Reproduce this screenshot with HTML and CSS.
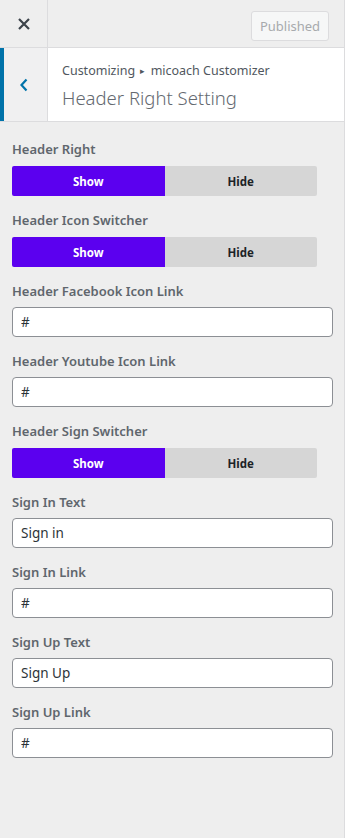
FILE: index.html
```html
<!DOCTYPE html>
<html lang="en">
<head>
    <meta charset="UTF-8">
    <meta name="viewport" content="width=device-width, initial-scale=1.0">
    <title>Customizer - Header Right Setting</title>
    <link rel="stylesheet" href="styles.css">
</head>
<body>
    <div class="customizer">
        <div class="topbar">
            <div class="close-btn">
                <svg width="12" height="12" viewBox="0 0 12 12">
                    <path d="M1 1 L11 11 M11 1 L1 11" stroke="#3c434a" stroke-width="2.2" fill="none"/>
                </svg>
            </div>
            <div class="topbar-actions">
                <button class="publish-btn">Published</button>
            </div>
        </div>

        <div class="section-head">
            <div class="back-btn">
                <svg width="10" height="14" viewBox="0 0 10 14">
                    <polyline points="7.5,1.5 2.5,7 7.5,12.5" stroke="#0073aa" stroke-width="2.2" fill="none"/>
                </svg>
            </div>
            <div class="section-title">
                <div class="crumbs">Customizing <span class="arrow">&#9656;</span> micoach Customizer</div>
                <h2>Header Right Setting</h2>
            </div>
        </div>

        <div class="controls">
            <div class="control">
                <label class="control-label">Header Right</label>
                <div class="switch">
                    <span class="switch-opt on">Show</span>
                    <span class="switch-opt">Hide</span>
                </div>
            </div>
            <div class="control">
                <label class="control-label">Header Icon Switcher</label>
                <div class="switch">
                    <span class="switch-opt on">Show</span>
                    <span class="switch-opt">Hide</span>
                </div>
            </div>
            <div class="control">
                <label class="control-label">Header Facebook Icon Link</label>
                <input class="text-input" type="text" value="#">
            </div>
            <div class="control">
                <label class="control-label">Header Youtube Icon Link</label>
                <input class="text-input" type="text" value="#">
            </div>
            <div class="control">
                <label class="control-label">Header Sign Switcher</label>
                <div class="switch">
                    <span class="switch-opt on">Show</span>
                    <span class="switch-opt">Hide</span>
                </div>
            </div>
            <div class="control">
                <label class="control-label">Sign In Text</label>
                <input class="text-input" type="text" value="Sign in">
            </div>
            <div class="control">
                <label class="control-label">Sign In Link</label>
                <input class="text-input" type="text" value="#">
            </div>
            <div class="control">
                <label class="control-label">Sign Up Text</label>
                <input class="text-input" type="text" value="Sign Up">
            </div>
            <div class="control">
                <label class="control-label">Sign Up Link</label>
                <input class="text-input" type="text" value="#">
            </div>
        </div>
    </div>
</body>
</html>
```

FILE: styles.css
```css
* {
    box-sizing: border-box;
}
body {
    margin: 0;
    background: #ffffff;
    font-family: "Noto Sans", "Open Sans", sans-serif;
    color: #50575e;
}
.customizer {
    width: 345px;
    min-height: 838px;
    background: #eeeeee;
    border-right: 1px solid #dcdcde;
}

/* Top bar */
.topbar {
    display: flex;
    height: 48px;
    border-bottom: 1px solid #dcdcde;
}
.close-btn {
    width: 48px;
    display: flex;
    align-items: center;
    justify-content: center;
    border-right: 1px solid #dcdcde;
}
.topbar-actions {
    flex: 1;
    display: flex;
    justify-content: flex-end;
    align-items: flex-start;
    padding: 11px 15px 0 0;
}
.publish-btn {
    height: 30px;
    width: 78px;
    padding: 0;
    background: #f6f7f7;
    border: 1px solid #dcdcde;
    border-radius: 3px;
    color: #a7aaad;
    font-family: inherit;
    font-size: 13px;
}

/* Section header */
.section-head {
    display: flex;
    height: 74px;
    background: #ffffff;
    border-bottom: 1px solid #dcdcde;
}
.back-btn {
    width: 48px;
    display: flex;
    align-items: center;
    justify-content: center;
    padding-right: 4px;
    background: #f0f0f1;
    border-left: 4px solid #0073aa;
    border-right: 1px solid #dcdcde;
}
.section-title {
    padding: 13px 0 0 14px;
}
.crumbs {
    font-size: 12.5px;
    line-height: 20px;
    color: #50575e;
}
.crumbs .arrow {
    font-size: 9px;
    vertical-align: 1px;
    margin: 0 2px;
}
.section-title h2 {
    margin: 4px 0 0;
    font-size: 18.5px;
    font-weight: 300;
    line-height: 26px;
    color: #646970;
}

/* Controls */
.controls {
    padding: 17px 12px 0;
}
.control {
    margin-bottom: 14px;
}
.control-label {
    display: block;
    font-size: 13px;
    font-weight: 600;
    line-height: 20px;
    color: #5f666d;
}
.switch {
    display: flex;
    width: 305px;
    height: 30px;
    margin-top: 7px;
    border-radius: 2px;
    overflow: hidden;
}
.switch-opt {
    flex: 1;
    display: flex;
    align-items: center;
    justify-content: center;
    background: #d6d6d6;
    color: #1d2327;
    font-size: 11.5px;
    font-weight: 700;
}
.switch-opt.on {
    background: #5b00ef;
    color: #ffffff;
}
.text-input {
    display: block;
    width: 321px;
    height: 30px;
    margin-top: 6px;
    padding: 0 8px;
    border: 1px solid #8c8f94;
    border-radius: 4px;
    background: #ffffff;
    color: #2c3338;
    font-family: inherit;
    font-size: 13.5px;
}
```
